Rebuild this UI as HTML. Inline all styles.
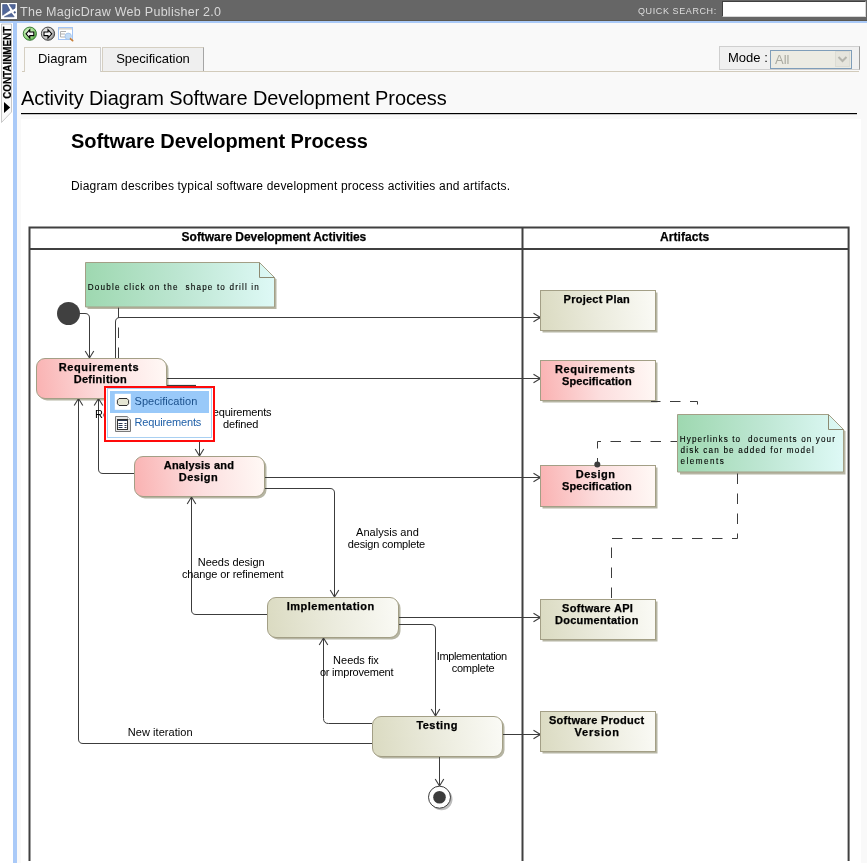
<!DOCTYPE html>
<html><head><meta charset="utf-8">
<style>
*{margin:0;padding:0;box-sizing:border-box}
html,body{width:867px;height:863px;overflow:hidden;background:#f9f9f9;font-family:"Liberation Sans",sans-serif;position:relative}
.abs{position:absolute}
#titlebar{left:0;top:0;width:867px;height:21px;background:#666;border-bottom:1px solid #5a5852}
#title{left:20px;top:5px;font-size:12.5px;letter-spacing:0.27px;color:#d8d8d8;white-space:nowrap}
#qs{left:638px;top:6px;font-size:9px;color:#dedede;letter-spacing:0.6px;white-space:nowrap}
#qsbox{left:722px;top:1px;width:144px;height:16px;background:#fff;border:1px solid #d8d8d8;border-top-color:#404040;border-left-color:#404040}
#blueline{left:0;top:21px;width:867px;height:2px;background:#aacaf8}
#side{left:0;top:23px;width:13px;height:840px;background:#fff}
#bluestrip{left:13px;top:21px;width:4px;height:842px;background:#aacaf8}
#ctab{left:1px;top:24px;width:11px;height:100px}
#main{left:17px;top:23px;width:850px;height:840px;background:#f9f9f9}
.tab{top:47px;height:24px;border:1px solid #d5cfc2;border-right-color:#a5a5a5;border-bottom:none;font-size:13px;text-align:center;line-height:21px;color:#000}
#tab1{left:24px;width:77px;background:#f9f9f9;height:25px;border-right-color:#cfcfcf}
#tab2{left:102px;width:102px;background:#efefef}
#tabline{left:22px;top:71px;width:837px;height:1px;background:#d2cbbb}
#modebox{left:719px;top:46px;width:141px;height:24px;border:1px solid #cfcfcf;border-right-color:#9a9a9a;background:#f0f0f0}
#modelbl{left:728px;top:50px;font-size:13px;color:#000}
#modesel{left:770px;top:50px;width:82px;height:19px;border:1px solid #7f9db9;background:#ecebe3}
#modeall{left:775px;top:52px;font-size:13px;color:#a9a9a0}
#modebtn{left:835px;top:51px;width:15px;height:16px;background:#e6e5dd;border:1px solid #dcdcd4}
#h1{left:21px;top:87px;font-size:20px;letter-spacing:-0.1px;color:#000;white-space:nowrap}
#h1line{left:21px;top:113px;width:836px;height:1px;background:#000;box-shadow:0 1px 0 #c8c8c8}
#content{left:21px;top:119px;width:840px;height:744px;background:#fff}
#h2{left:71px;top:130px;font-size:20px;letter-spacing:-0.08px;font-weight:bold;color:#000;white-space:nowrap}
#desc{left:71px;top:179px;font-size:12px;letter-spacing:0.18px;color:#000;white-space:nowrap}
svg text{font-family:"Liberation Sans",sans-serif}
.abs{will-change:transform}
</style></head><body>
<div id="titlebar" class="abs"></div>
<svg class="abs" style="left:0;top:0" width="20" height="21" viewBox="0 0 20 21">
<rect x="1" y="3" width="16" height="16" fill="#fff"/>
<g fill="#52679a" stroke="#3d4f7c" stroke-width="0.6" stroke-linejoin="round">
<path d="M2.6 4.6 H7 L9.8 10.3 L2.6 15.3 Z"/>
<path d="M9.3 4.6 H15.3 L15 8.2 L12.7 9.4 Z"/>
<path d="M4.4 16.8 H14.2 L11.5 13.2 Z"/>
<circle cx="14.7" cy="12.4" r="0.8"/>
</g>
</svg>
<div id="title" class="abs">The MagicDraw Web Publisher 2.0</div>
<div id="qs" class="abs">QUICK SEARCH:</div>
<div id="qsbox" class="abs"></div>
<div id="blueline" class="abs"></div>
<div id="side" class="abs"></div>
<div id="bluestrip" class="abs"></div>
<svg class="abs" style="left:0;top:23px" width="13" height="102" viewBox="0 0 13 102">
<path d="M1.5 1 L11.5 1 L11.5 89 L1.5 99.5 Z" fill="#fafafa" stroke="#c8c8c8"/>
<text transform="translate(10.6,75.8) rotate(-90)" font-size="10.5" font-weight="bold" fill="#000" stroke="#000" stroke-width="0.2" textLength="72" lengthAdjust="spacingAndGlyphs">CONTAINMENT</text>
<path d="M4 79 L10.2 84.5 L4 90 Z" fill="#000"/>
</svg>
<div id="main" class="abs"></div>
<!-- icons -->
<svg class="abs" style="left:20px;top:24px" width="56" height="20" viewBox="0 0 56 20">
<defs>
<radialGradient id="gg" cx="0.4" cy="0.4" r="0.65"><stop offset="0" stop-color="#e6f8dc"/><stop offset="0.65" stop-color="#9bdc86"/><stop offset="1" stop-color="#4aa43e"/></radialGradient>
<radialGradient id="gy" cx="0.4" cy="0.4" r="0.65"><stop offset="0" stop-color="#f8f8f8"/><stop offset="0.65" stop-color="#c8c8c8"/><stop offset="1" stop-color="#7a7a7a"/></radialGradient>
</defs>
<circle cx="9.85" cy="9.7" r="6.6" fill="url(#gg)" stroke="#2c6e2a" stroke-width="0.9"/>
<path d="M6 9.8 L9.8 5.6 V8 H13.8 V11.6 H9.8 V14 Z" fill="#f6f6f6" stroke="#000" stroke-width="1.1" stroke-linejoin="miter"/>
<circle cx="28" cy="9.7" r="6.6" fill="url(#gy)" stroke="#333" stroke-width="0.9"/>
<path d="M31.8 9.8 L28 5.6 V8 H24 V11.6 H28 V14 Z" fill="#f6f6f6" stroke="#000" stroke-width="1.1"/>
<rect x="38.5" y="3.5" width="14" height="12" fill="#fff" stroke="#a3c5f6" stroke-width="1"/>
<rect x="39" y="4" width="13" height="1.6" fill="#d9d6cf"/>
<path d="M40.5 7.5 H46 M40.5 7.5 V13 M40.5 10 H45 M40.5 13 H45" stroke="#b0b0b0" stroke-width="1" fill="none"/>
<circle cx="48.2" cy="12.3" r="3.2" fill="#c3dcf6" stroke="#9fc0e8" stroke-width="0.8"/>
<path d="M50.6 14.8 L52.6 16.6" stroke="#c9803a" stroke-width="1.8" stroke-linecap="round"/>
</svg>
<div id="tabline" class="abs"></div>
<div id="tab1" class="abs tab">Diagram</div>
<div id="tab2" class="abs tab">Specification</div>
<div id="modebox" class="abs"></div>
<div id="modelbl" class="abs">Mode :</div>
<div id="modesel" class="abs"></div>
<div id="modeall" class="abs">All</div>
<div id="modebtn" class="abs"></div>
<svg class="abs" style="left:835px;top:51px" width="15" height="16"><path d="M3.5 6 L7.5 10 L11.5 6" fill="none" stroke="#b5b5ad" stroke-width="2"/></svg>
<div id="h1" class="abs">Activity Diagram Software Development Process</div>
<div id="h1line" class="abs"></div>
<div id="content" class="abs"></div>
<div id="h2" class="abs">Software Development Process</div>
<div id="desc" class="abs">Diagram describes typical software development process activities and artifacts.</div>

<svg class="abs" style="left:0;top:0" width="867" height="863" viewBox="0 0 867 863">
<defs>
<linearGradient id="gpink" x1="0" y1="0.52" x2="1" y2="0.48">
<stop offset="0" stop-color="#fab3b3"/><stop offset="0.5" stop-color="#fcdede"/><stop offset="1" stop-color="#fff8f5"/></linearGradient>
<linearGradient id="golive" x1="0" y1="0.52" x2="1" y2="0.48">
<stop offset="0" stop-color="#dbdbc2"/><stop offset="0.5" stop-color="#ebebdd"/><stop offset="1" stop-color="#fafaf5"/></linearGradient>
<linearGradient id="ggreen" x1="0" y1="0.5" x2="1" y2="0.5">
<stop offset="0" stop-color="#9ed8b0"/><stop offset="0.5" stop-color="#bde6d2"/><stop offset="1" stop-color="#def9f6"/></linearGradient>
<marker id="arr" markerWidth="12" markerHeight="12" refX="9.5" refY="6" orient="auto" markerUnits="userSpaceOnUse">
<path d="M2.5 1.7 L9.5 6 L2.5 10.3" fill="none" stroke="#3c3c3c" stroke-width="1.1"/></marker>
</defs>
<!-- swimlane frame -->
<g stroke="#404040" stroke-width="2" fill="none">
<path d="M29.5 861 V227.6 H848.6 V861"/>
<path d="M29.5 249 H848.6"/>
<path d="M522.5 228 V861"/>
</g>



<!-- shadows -->
<g fill="#b6b5a3">
<rect x="38.5" y="360.5" width="130" height="40" rx="8.5"/>
<rect x="136.5" y="458.5" width="130" height="40" rx="8.5"/>
<rect x="269.5" y="599.5" width="131" height="40" rx="8.5"/>
<rect x="374.5" y="718.5" width="130" height="40" rx="8.5"/>
<rect x="542.5" y="292.5" width="115" height="40"/>
<rect x="542.5" y="362.5" width="115" height="40"/>
<rect x="542.5" y="467.5" width="115" height="41"/>
<rect x="542.5" y="601.5" width="115" height="40"/>
<rect x="542.5" y="713.5" width="115" height="40"/>
<path d="M87.5 264.5 H261.5 L276.5 279.5 V309 H87.5 Z"/>
<path d="M680 416.5 H830.5 L845.5 431.5 V474.5 H680 Z"/>
</g>
<!-- edges -->
<g stroke="#3c3c3c" stroke-width="1" fill="none">
<path d="M79 313.5 H85 Q89.5 313.5 89.5 318 V358" marker-end="url(#arr)"/>
<path d="M115.5 358 V322 Q115.5 317.5 120 317.5 H540.5" marker-end="url(#arr)"/>
<path d="M167 378.5 H540.5" marker-end="url(#arr)"/>
<path d="M199.5 438 V456" marker-end="url(#arr)"/>
<path d="M134 473.5 H103 Q98.5 473.5 98.5 469 V398.5" marker-end="url(#arr)"/>
<path d="M265 477.5 H540.5" marker-end="url(#arr)"/>
<path d="M265 488.5 H330 Q334.5 488.5 334.5 493 V597" marker-end="url(#arr)"/>
<path d="M267 614.5 H196 Q191.5 614.5 191.5 610 V497" marker-end="url(#arr)"/>
<path d="M398 617.5 H540.5" marker-end="url(#arr)"/>
<path d="M398 624.5 H431 Q435.5 624.5 435.5 629 V716" marker-end="url(#arr)"/>
<path d="M372 723.5 H328.5 Q323.5 723.5 323.5 718.5 V638" marker-end="url(#arr)"/>
<path d="M372 743.5 H83 Q78.5 743.5 78.5 739 V398.5" marker-end="url(#arr)"/>
<path d="M503 734.5 H540.5" marker-end="url(#arr)"/>
<path d="M439.5 757 V786" marker-end="url(#arr)"/>
</g>
<g stroke="#3c3c3c" stroke-width="1" fill="none" stroke-dasharray="10.5,9.5">
<path d="M118.5 307.5 V358"/>
<path d="M697.5 414 V401.5 H651" stroke-dashoffset="10.5"/>
<path d="M677 441.5 H597.5 V464" stroke-dashoffset="4"/>
<path d="M737.5 473.5 V538.5 H611.5 V599"/>
</g>

<!-- initial node -->
<circle cx="68.5" cy="313.5" r="11.5" fill="#404040"/>
<!-- final node -->
<circle cx="441.5" cy="799.2" r="11" fill="#bdbdbd"/>
<circle cx="439.5" cy="797.2" r="11" fill="#fff" stroke="#3c3c3c" stroke-width="1"/>
<circle cx="439.5" cy="797.2" r="6.3" fill="#3c3c3c"/>

<!-- activity nodes -->
<g stroke="#a39f86" stroke-width="1">
<rect x="36.5" y="358.5" width="130" height="40" rx="8.5" fill="url(#gpink)"/>
<rect x="134.5" y="456.5" width="130" height="40" rx="8.5" fill="url(#gpink)"/>
<rect x="267.5" y="597.5" width="131" height="40" rx="8.5" fill="url(#golive)"/>
<rect x="372.5" y="716.5" width="130" height="40" rx="8.5" fill="url(#golive)"/>
<rect x="540.5" y="290.5" width="115" height="40" fill="url(#golive)"/>
<rect x="540.5" y="360.5" width="115" height="40" fill="url(#gpink)"/>
<rect x="540.5" y="465.5" width="115" height="41" fill="url(#gpink)"/>
<rect x="540.5" y="599.5" width="115" height="40" fill="url(#golive)"/>
<rect x="540.5" y="711.5" width="115" height="40" fill="url(#golive)"/>
<path d="M85.5 262.5 H259.5 L274.5 277.5 V307 H85.5 Z" fill="url(#ggreen)"/>
<path d="M259.5 262.5 V277.5 H274.5" fill="none" stroke="#8c8a72"/>
<path d="M677.5 414.5 H828.5 L843.5 429.5 V472 H677.5 Z" fill="url(#ggreen)"/>
<path d="M828.5 414.5 V429.5 H843.5" fill="none" stroke="#8c8a72"/>
</g>
<circle cx="597.3" cy="464.6" r="3" fill="#3c3c3c"/>
<!--TEXTS-->
<text x="58.80" y="371" font-size="11" font-weight="bold" fill="#000" stroke="#000" stroke-width="0.25" textLength="79.76" lengthAdjust="spacing">Requirements</text>
<text x="73.80" y="382.5" font-size="11" font-weight="bold" fill="#000" stroke="#000" stroke-width="0.25" textLength="53.02" lengthAdjust="spacing">Definition</text>
<text x="163.80" y="468.5" font-size="11" font-weight="bold" fill="#000" stroke="#000" stroke-width="0.25" textLength="70.06" lengthAdjust="spacing">Analysis and</text>
<text x="178.80" y="481.2" font-size="11" font-weight="bold" fill="#000" stroke="#000" stroke-width="0.25" textLength="38.99" lengthAdjust="spacing">Design</text>
<text x="286.80" y="609.5" font-size="11" font-weight="bold" fill="#000" stroke="#000" stroke-width="0.25" textLength="87.50" lengthAdjust="spacing">Implementation</text>
<text x="416.40" y="728.5" font-size="11" font-weight="bold" fill="#000" stroke="#000" stroke-width="0.25" textLength="41.10" lengthAdjust="spacing">Testing</text>
<text x="563.60" y="302.7" font-size="11" font-weight="bold" fill="#000" stroke="#000" stroke-width="0.25" textLength="66.18" lengthAdjust="spacing">Project Plan</text>
<text x="554.90" y="373.1" font-size="11" font-weight="bold" fill="#000" stroke="#000" stroke-width="0.25" textLength="79.86" lengthAdjust="spacing">Requirements</text>
<text x="562.00" y="385.2" font-size="11" font-weight="bold" fill="#000" stroke="#000" stroke-width="0.25" textLength="69.67" lengthAdjust="spacing">Specification</text>
<text x="575.70" y="478.3" font-size="11" font-weight="bold" fill="#000" stroke="#000" stroke-width="0.25" textLength="39.29" lengthAdjust="spacing">Design</text>
<text x="562.00" y="490.2" font-size="11" font-weight="bold" fill="#000" stroke="#000" stroke-width="0.25" textLength="69.67" lengthAdjust="spacing">Specification</text>
<text x="562.00" y="612.1" font-size="11" font-weight="bold" fill="#000" stroke="#000" stroke-width="0.25" textLength="70.85" lengthAdjust="spacing">Software API</text>
<text x="554.90" y="624.2" font-size="11" font-weight="bold" fill="#000" stroke="#000" stroke-width="0.25" textLength="83.46" lengthAdjust="spacing">Documentation</text>
<text x="549.00" y="723.7" font-size="11" font-weight="bold" fill="#000" stroke="#000" stroke-width="0.25" textLength="95.18" lengthAdjust="spacing">Software Product</text>
<text x="574.60" y="735.9" font-size="11" font-weight="bold" fill="#000" stroke="#000" stroke-width="0.25" textLength="44.35" lengthAdjust="spacing">Version</text>
<text x="205.00" y="415.6" font-size="11" font-weight="normal" fill="#000" textLength="66.58" lengthAdjust="spacing">Requirements</text>
<text x="223.00" y="428.2" font-size="11" font-weight="normal" fill="#000" textLength="35.29" lengthAdjust="spacing">defined</text>
<text x="356.10" y="536.3" font-size="11" font-weight="normal" fill="#000" textLength="62.67" lengthAdjust="spacing">Analysis and</text>
<text x="347.80" y="548.3" font-size="11" font-weight="normal" fill="#000" textLength="77.41" lengthAdjust="spacing">design complete</text>
<text x="197.80" y="566.3" font-size="11" font-weight="normal" fill="#000" textLength="66.78" lengthAdjust="spacing">Needs design</text>
<text x="181.90" y="578.3" font-size="11" font-weight="normal" fill="#000" textLength="101.75" lengthAdjust="spacing">change or refinement</text>
<text x="333.10" y="664.2" font-size="11" font-weight="normal" fill="#000" textLength="45.76" lengthAdjust="spacing">Needs fix</text>
<text x="319.90" y="676.2" font-size="11" font-weight="normal" fill="#000" textLength="73.62" lengthAdjust="spacing">or improvement</text>
<text x="436.80" y="660.4" font-size="11" font-weight="normal" fill="#000" textLength="70.42" lengthAdjust="spacing">Implementation</text>
<text x="451.80" y="672.2" font-size="11" font-weight="normal" fill="#000" textLength="42.74" lengthAdjust="spacing">complete</text>
<text x="127.80" y="735.8" font-size="11" font-weight="normal" fill="#000" textLength="64.80" lengthAdjust="spacing">New iteration</text>
<text x="95.10" y="417.8" font-size="11" font-weight="normal" fill="#000">Re</text>
<text x="181.60" y="241" font-size="12" font-weight="bold" fill="#000" stroke="#000" stroke-width="0.25" textLength="184.71" lengthAdjust="spacing">Software Development Activities</text>
<text x="660.00" y="241" font-size="12" font-weight="bold" fill="#000" stroke="#000" stroke-width="0.25" textLength="49.19" lengthAdjust="spacing">Artifacts</text>
<text transform="translate(87.84,290) scale(0.86,1)" x="0" y="0" font-size="9.5" font-weight="normal" fill="#000" stroke="#000" stroke-width="0.12" textLength="198.89" lengthAdjust="spacing">Double click on the&#160; shape to drill in</text>
<text transform="translate(679.74,442.3) scale(0.86,1)" x="0" y="0" font-size="9.5" font-weight="normal" fill="#000" stroke="#000" stroke-width="0.12" textLength="180.52" lengthAdjust="spacing">Hyperlinks to&#160; documents on your</text>
<text transform="translate(680.60,453.4) scale(0.86,1)" x="0" y="0" font-size="9.5" font-weight="normal" fill="#000" stroke="#000" stroke-width="0.12" textLength="154.78" lengthAdjust="spacing">disk can be added for model</text>
<text transform="translate(680.60,464.3) scale(0.86,1)" x="0" y="0" font-size="9.5" font-weight="normal" fill="#000" stroke="#000" stroke-width="0.12" textLength="50.21" lengthAdjust="spacing">elements</text>
<!--/TEXTS-->
<!-- popup -->
<path d="M167 385.5 H196" stroke="#3a3a3a" stroke-width="1.2"/>
<rect x="105" y="387" width="109" height="54" fill="#fff" stroke="#ff0a0a" stroke-width="2"/>
<rect x="107.5" y="388.5" width="104" height="49" fill="#fff" stroke="#a9d0f2" stroke-width="1"/>
<rect x="110" y="391" width="99" height="22" fill="#99c9f9"/>
<rect x="114.8" y="393.8" width="16" height="16" fill="#fff"/>
<path d="M119 398.5 H127 L128.6 400.3 V403.7 L127 405.5 H119 L117.4 403.7 V400.3 Z" fill="#e6e6d4" stroke="#2e2e2e" stroke-width="1"/>
<path d="M115.5 416.5 H127.5 L130.5 419.5 V431.5 H115.5 Z" fill="#e8e8e8" stroke="#7a7a7a" stroke-width="1"/>
<path d="M127.5 416.5 V419.5 H130.5" fill="#fff" stroke="#aaa" stroke-width="0.8"/>
<rect x="117.5" y="419.5" width="10" height="10" fill="#fff" stroke="#333" stroke-width="1"/>
<path d="M118 420.5 H127 M118.5 423.5 H122.5 M124.5 423.5 H126.5 M118.5 425.5 H122.5 M124.5 425.5 H126.5 M118.5 427.5 H122.5 M124.5 427.5 H126.5" stroke="#2b3a55" stroke-width="1.1"/>
<!--PTEXTS-->
<text x="134.50" y="404.8" font-size="11" font-weight="normal" fill="#1a4f8a" textLength="62.88" lengthAdjust="spacing">Specification</text>
<text x="134.50" y="426.3" font-size="11" font-weight="normal" fill="#2060a8" textLength="66.78" lengthAdjust="spacing">Requirements</text>
<!--/PTEXTS-->
</svg>
</body></html>
